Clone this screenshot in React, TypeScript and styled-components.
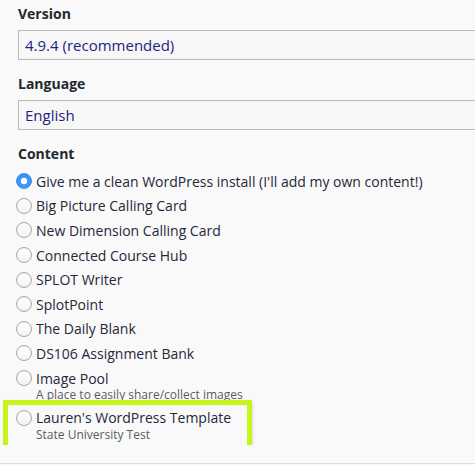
import React from 'react';
import styled, { createGlobalStyle } from 'styled-components';

const GlobalStyle = createGlobalStyle`
	html, body {
		margin: 0;
		padding: 0;
		background: #f9f9f9;
		overflow: hidden;
	}
	body {
		font-family: 'Open Sans', 'Noto Sans', sans-serif;
	}
`;

interface IOption {
	label: string;
	description?: string;
	checked?: boolean;
	highlighted?: boolean;
}

const options: IOption[] = [
	{ label: "Give me a clean WordPress install (I'll add my own content!)", checked: true },
	{ label: 'Big Picture Calling Card' },
	{ label: 'New Dimension Calling Card' },
	{ label: 'Connected Course Hub' },
	{ label: 'SPLOT Writer' },
	{ label: 'SplotPoint' },
	{ label: 'The Daily Blank' },
	{ label: 'DS106 Assignment Bank' },
	{ label: 'Image Pool', description: 'A place to easily share/collect images' },
	{
		label: "Lauren's WordPress Template",
		description: 'State University Test',
		highlighted: true,
	},
];

const App = () => {
	return (
		<>
			<GlobalStyle />
			<Form>
				<Field>
					<Label>Version</Label>
					<Select>4.9.4 (recommended)</Select>
				</Field>
				<Field>
					<Label>Language</Label>
					<Select>English</Select>
				</Field>
				<Field>
					<Label>Content</Label>
					<OptionList>
						{options.map(option => (
							<Option
								key={option.label}
								$highlighted={option.highlighted}
							>
								<OptionRow>
									<Radio $checked={option.checked} />
									<OptionLabel>{option.label}</OptionLabel>
								</OptionRow>
								{option.description && (
									<Description>{option.description}</Description>
								)}
							</Option>
						))}
					</OptionList>
				</Field>
			</Form>
			<Footer />
		</>
	);
};

export default App;

const Form = styled.div`
	width: 520px;
	padding: 4px 0 0 18px;
	display: flex;
	flex-direction: column;
	gap: 14px;
`;

const Field = styled.div`
	display: flex;
	flex-direction: column;
	gap: 6px;
`;

const Label = styled.div`
	font-size: 14px;
	line-height: 20px;
	font-weight: 700;
	color: #23282d;
`;

const Select = styled.div`
	height: 30px;
	box-sizing: border-box;
	border: 1px solid #bbbbbb;
	background: #f7f7f7;
	padding: 0 6px;
	font-size: 15px;
	line-height: 28px;
	color: #23237e;
`;

const OptionList = styled.div`
	display: flex;
	flex-direction: column;
	margin-left: -2px;
	margin-top: -1px;
`;

const Option = styled.div<{ $highlighted?: boolean }>`
	display: flex;
	flex-direction: column;
	box-sizing: border-box;
	width: ${p => (p.$highlighted ? '239px' : 'auto')};
	margin-left: ${p => (p.$highlighted ? '-8px' : '0')};
	padding-left: ${p => (p.$highlighted ? '8px' : '0')};
	margin-top: ${p => (p.$highlighted ? '3px' : '0')};
	padding-bottom: ${p => (p.$highlighted ? '3px' : '0')};
	outline: ${p => (p.$highlighted ? '5px solid #c6f51b' : 'none')};
	box-shadow: ${p =>
		p.$highlighted ? '1px 2px 3px 5px rgba(0, 0, 0, 0.12)' : 'none'};
`;

const OptionRow = styled.label`
	display: flex;
	align-items: center;
	gap: 4px;
	height: 24.6px;
`;

const Radio = styled.span<{ $checked?: boolean }>`
	width: 16px;
	height: 16px;
	box-sizing: border-box;
	border-radius: 50%;
	flex-shrink: 0;
	border: 1px solid ${p => (p.$checked ? '#3b8ef5' : '#a8a8a8')};
	background: ${p =>
		p.$checked
			? 'radial-gradient(circle, #ffffff 0 3px, #3d95f7 3.6px)'
			: 'linear-gradient(#ffffff, #f2f2f2)'};
	box-shadow: inset 0 1px 1px rgba(0, 0, 0, 0.05);
`;

const OptionLabel = styled.span`
	font-size: 14px;
	color: #25283a;
	white-space: nowrap;
`;

const Description = styled.div`
	margin-top: -3px;
	padding-left: 20px;
	font-size: 12px;
	line-height: 15px;
	color: #5a5c63;
`;

const Footer = styled.div`
	position: fixed;
	left: 0;
	right: 0;
	top: 463px;
	border-top: 1px solid #dddddd;
`;
